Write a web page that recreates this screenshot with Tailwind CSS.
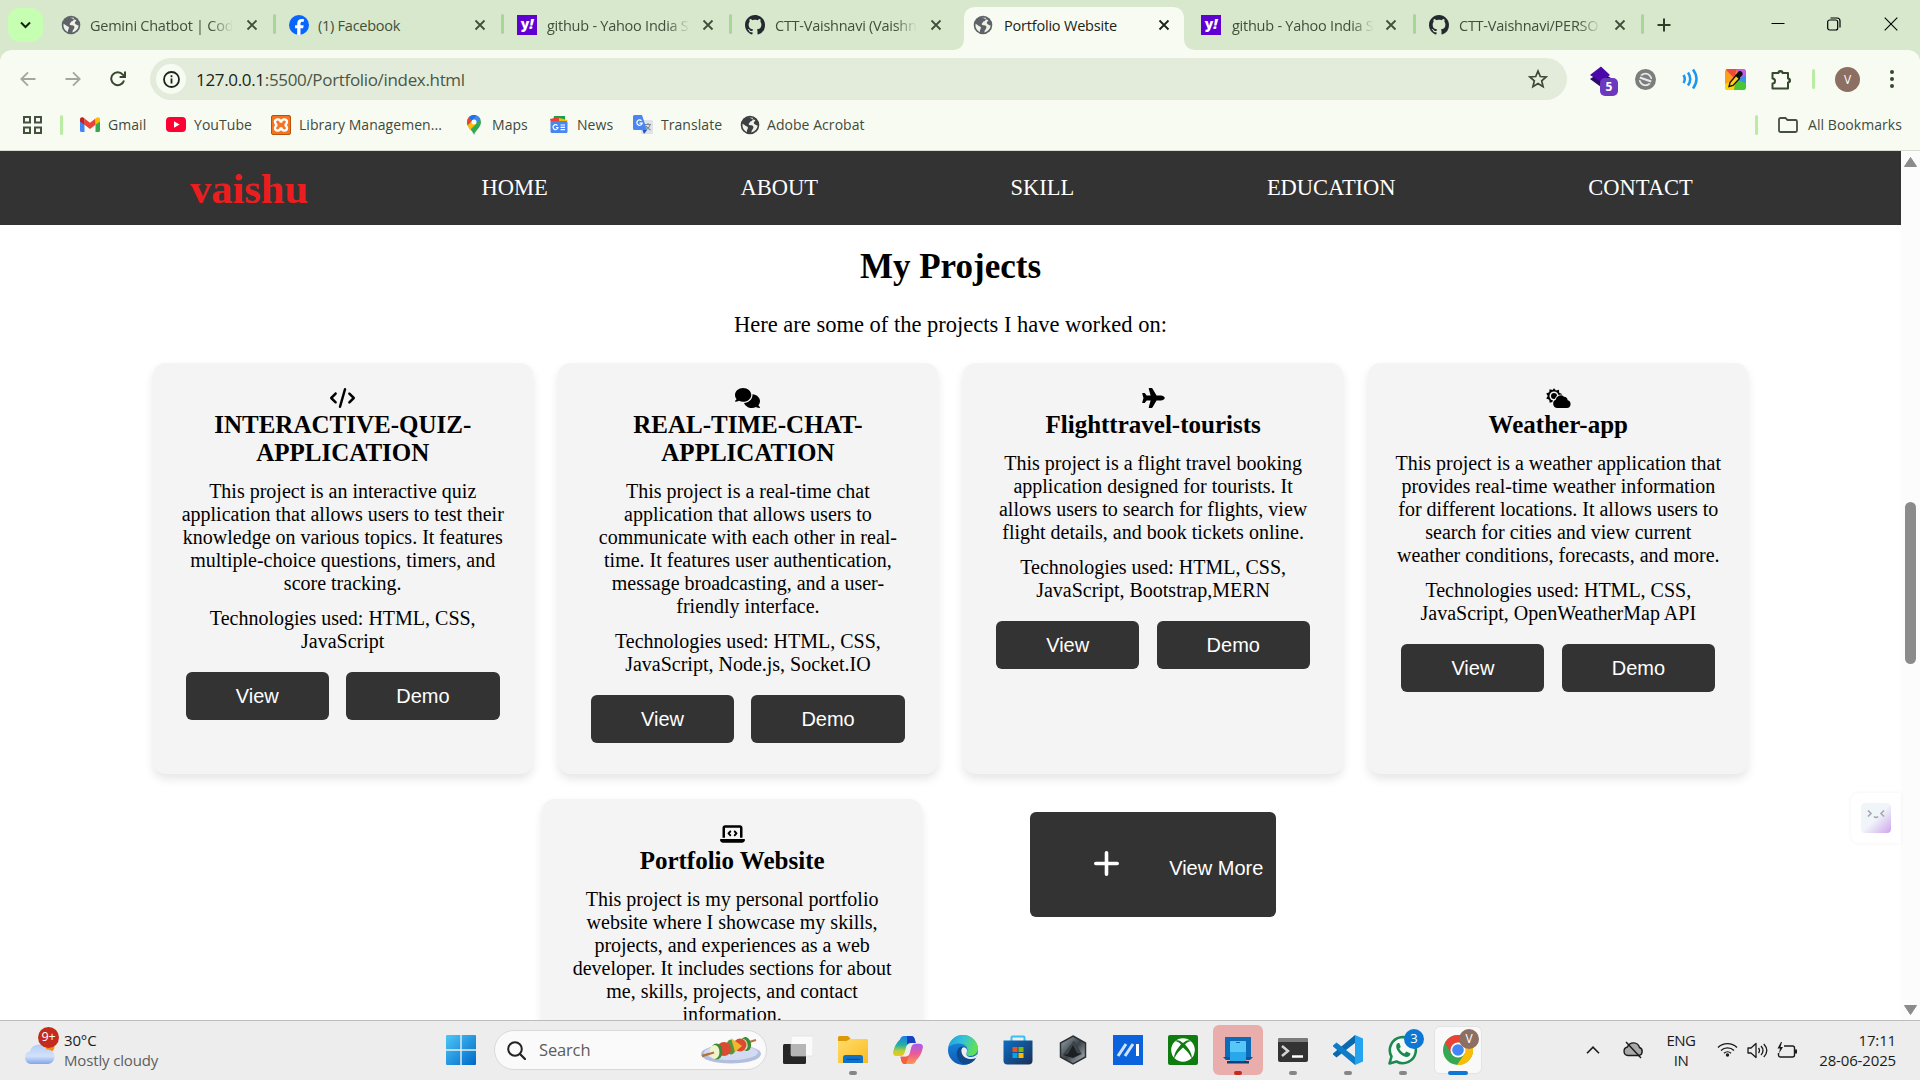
<!DOCTYPE html>
<html lang="en">
<head>
<meta charset="utf-8">
<title>Portfolio Website</title>
<script src="https://cdn.jsdelivr.net/npm/@tailwindcss/browser@4"></script>
</head>
<body class="w-[1920px] h-[1080px] overflow-hidden bg-white font-['Open_Sans','Noto_Sans',sans-serif] text-black flex flex-col">
<svg class="absolute w-0 h-0">
  <symbol id="globe" viewBox="0 0 20 20"><circle cx="10" cy="10" r="9.3" fill="currentColor"/><path d="M9 2.6C10.5 3 12 2.4 12.8 2.9C13.4 5 11.6 6 10.4 6.6C9.6 7 9.8 8 9 8.6C8 9.4 9.2 10.4 10.8 10.2C12.6 10 13.6 11 13.4 12.4C13.2 14.2 11.4 14.6 11.4 17.4C14.6 17 17.4 14 17.6 10.6C16 10.4 15 9.6 14 8.6C13.2 7.8 14.6 6.4 15.4 5.2M2.6 8.8C4.4 9.6 5.4 11 7 11.6C8.2 12.2 8.2 13.4 7.4 14.2C6.8 15 7 16 7 17C4.2 16 2 13 2.6 8.8Z" fill="#eef3e8"/></symbol>
  <symbol id="github" viewBox="0 0 16 16"><path fill="#24292f" d="M8 0C3.58 0 0 3.58 0 8c0 3.54 2.29 6.53 5.47 7.59.4.07.55-.17.55-.38 0-.19-.01-.82-.01-1.49-2.01.37-2.53-.49-2.69-.94-.09-.23-.48-.94-.82-1.13-.28-.15-.68-.52-.01-.53.63-.01 1.08.58 1.23.82.72 1.21 1.87.87 2.33.66.07-.52.28-.87.51-1.07-1.78-.2-3.64-.89-3.64-3.95 0-.87.31-1.59.82-2.15-.08-.2-.36-1.02.08-2.12 0 0 .67-.21 2.2.82.64-.18 1.32-.27 2-.27s1.36.09 2 .27c1.53-1.04 2.2-.82 2.2-.82.44 1.1.16 1.92.08 2.12.51.56.82 1.27.82 2.15 0 3.07-1.87 3.75-3.65 3.95.29.25.54.73.54 1.48 0 1.07-.01 1.93-.01 2.2 0 .21.15.46.55.38A8.01 8.01 0 0 0 16 8c0-4.42-3.58-8-8-8z"/></symbol>
  <symbol id="close" viewBox="0 0 12 12"><path d="M1.5 1.5l9 9M10.5 1.5l-9 9" stroke="currentColor" stroke-width="1.8" fill="none"/></symbol>
  <linearGradient id="gWin" x1="0" y1="0" x2="1" y2="1"><stop offset="0" stop-color="#4cc8f8"/><stop offset="1" stop-color="#0067c8"/></linearGradient>
  <linearGradient id="gCloud" x1="0" y1="0" x2="0" y2="1"><stop offset="0" stop-color="#b4cdf6"/><stop offset=".6" stop-color="#d3e1fa"/><stop offset="1" stop-color="#7fa5ea"/></linearGradient>
  <linearGradient id="gFold" x1="0" y1="0" x2="1" y2="1"><stop offset="0" stop-color="#ffdc6b"/><stop offset="1" stop-color="#fbbc20"/></linearGradient>
  <linearGradient id="gCopA" x1="0" y1="0" x2="0" y2="1"><stop offset="0" stop-color="#1a7fe8"/><stop offset=".45" stop-color="#22b0a5"/><stop offset=".75" stop-color="#b9cf3a"/><stop offset="1" stop-color="#f5c518"/></linearGradient>
  <linearGradient id="gCopB" x1="0" y1="0" x2="0" y2="1"><stop offset="0" stop-color="#a65bf0"/><stop offset=".5" stop-color="#ee5a96"/><stop offset="1" stop-color="#fb9a4c"/></linearGradient>
  <linearGradient id="gEdA" x1="0" y1="0" x2="1" y2=".3"><stop offset="0" stop-color="#1f9be0"/><stop offset=".5" stop-color="#33c2d8"/><stop offset="1" stop-color="#5fe05a"/></linearGradient>
  <linearGradient id="gEdB" x1="0" y1="0" x2="0" y2="1"><stop offset="0" stop-color="#1a8fe3"/><stop offset="1" stop-color="#0d5bb8"/></linearGradient>
  <linearGradient id="gStore" x1="0" y1="0" x2="1" y2="1"><stop offset="0" stop-color="#0c6fc4"/><stop offset="1" stop-color="#1d2f55"/></linearGradient>
  <linearGradient id="gHex" x1="0" y1="0" x2="1" y2="1"><stop offset="0" stop-color="#a2acb4"/><stop offset=".5" stop-color="#3b4248"/><stop offset="1" stop-color="#c3c8cc"/></linearGradient>
</svg>

<!-- Tab strip -->
<div class="relative h-[50px] shrink-0 bg-[#d7e8cd] flex items-center text-[#3f4f3a] text-[14.5px] tracking-[-0.25px]">
  <div class="ml-2 w-[35px] h-[34px] rounded-xl bg-[#c6ffb1] grid place-items-center text-[#14210f]">
    <svg class="w-[11px] h-[8px]" viewBox="0 0 11 8"><path d="M1 1.5l4.500 4.500L10 1.500" fill="none" stroke="currentColor" stroke-width="2"/></svg>
  </div>
  <div class="flex ml-[5px]">
    <div class="w-[228px] h-[34px] flex items-center pl-[13px] relative"><svg class="w-5 h-5 text-[#5f6368]"><use href="#globe"/></svg><span class="ml-[9px] pt-[2px] w-[143px] overflow-hidden whitespace-nowrap [mask-image:linear-gradient(to_right,#000_84%,transparent)]">Gemini Chatbot | Cod</span><svg class="ml-[13px] w-3 h-3"><use href="#close"/></svg><i class="absolute right-0 top-[6px] w-[3px] h-[20px] rounded bg-[#a5d895]"></i></div>
    <div class="w-[228px] h-[34px] flex items-center pl-[13px] relative"><svg class="w-5 h-5" viewBox="0 0 20 20"><circle cx="10" cy="10" r="10" fill="#0866ff"/><path d="M8.200 20v-6.700H6.100v-3h2.100V8.900c0-3.400 1.500-5 4.900-5 .6 0 1.300.1 1.700.2v2.700h-1.100c-1.600 0-2.200.6-2.200 2.200v1.300h3.200l-.6 3h-2.600V20z" fill="#fff"/></svg><span class="ml-[9px] pt-[2px] w-[141px] overflow-hidden whitespace-nowrap">(1) Facebook</span><svg class="ml-[15px] w-3 h-3"><use href="#close"/></svg><i class="absolute right-0 top-[6px] w-[3px] h-[20px] rounded bg-[#a5d895]"></i></div>
    <div class="w-[228px] h-[34px] flex items-center pl-[13px] relative"><span class="w-5 h-5 bg-[#5f01d1] text-white font-extrabold text-[14px] leading-[18px] text-center">y<i>!</i></span><span class="ml-[10px] pt-[2px] w-[143px] overflow-hidden whitespace-nowrap [mask-image:linear-gradient(to_right,#000_84%,transparent)]">github - Yahoo India S</span><svg class="ml-[12px] w-3 h-3"><use href="#close"/></svg><i class="absolute right-0 top-[6px] w-[3px] h-[20px] rounded bg-[#a5d895]"></i></div>
    <div class="w-[228px] h-[34px] flex items-center pl-[13px] relative"><svg class="w-5 h-5"><use href="#github"/></svg><span class="ml-[10px] pt-[2px] w-[142px] overflow-hidden whitespace-nowrap [mask-image:linear-gradient(to_right,#000_84%,transparent)]">CTT-Vaishnavi (Vaishn</span><svg class="ml-[13px] w-3 h-3"><use href="#close"/></svg></div>
    <div class="w-[228px] h-[34px] flex items-center pl-[13px] relative text-[#1a2416]">
      <svg class="absolute left-[-8px] top-[-1px] w-[244px] h-[43px]" viewBox="0 0 244 43"><path d="M0 43C8 43 12 39 12 31V12C12 4 16 0 24 0H220C228 0 232 4 232 12V31C232 39 236 43 244 43Z" fill="#f8fbf2"/></svg>
      <svg class="relative w-5 h-5 text-[#5f6368]"><use href="#globe"/></svg><span class="relative ml-[11px] pt-[2px] w-[141px] overflow-hidden whitespace-nowrap tracking-[-0.2px]">Portfolio Website</span><svg class="relative ml-[13px] w-3 h-3"><use href="#close"/></svg></div>
    <div class="w-[228px] h-[34px] flex items-center pl-[13px] relative"><span class="w-5 h-5 bg-[#5f01d1] text-white font-extrabold text-[14px] leading-[18px] text-center">y<i>!</i></span><span class="ml-[11px] pt-[2px] w-[142px] overflow-hidden whitespace-nowrap [mask-image:linear-gradient(to_right,#000_84%,transparent)]">github - Yahoo India S</span><svg class="ml-[11px] w-3 h-3"><use href="#close"/></svg><i class="absolute right-0 top-[6px] w-[3px] h-[20px] rounded bg-[#a5d895]"></i></div>
    <div class="w-[228px] h-[34px] flex items-center pl-[13px] relative"><svg class="w-5 h-5"><use href="#github"/></svg><span class="ml-[10px] pt-[2px] w-[142px] overflow-hidden whitespace-nowrap [mask-image:linear-gradient(to_right,#000_84%,transparent)]">CTT-Vaishnavi/PERSO</span><svg class="ml-[13px] w-3 h-3"><use href="#close"/></svg><i class="absolute right-0 top-[6px] w-[3px] h-[20px] rounded bg-[#a5d895]"></i></div>
  </div>
  <svg class="ml-[13px] w-[14px] h-[14px]" viewBox="0 0 14 14"><path d="M7 .5v13M.5 7h13" stroke="#2f3d2a" stroke-width="2"/></svg>
  <div class="ml-auto flex items-center text-black mb-[2px]">
    <svg class="w-[14px] h-[14px]" viewBox="0 0 14 14"><path d="M.5 6.500h13" stroke="currentColor"/></svg>
    <svg class="ml-[42px] w-[14px] h-[14px]" viewBox="0 0 14 14"><rect x=".7" y="3" width="10" height="10" rx="2" fill="none" stroke="currentColor" stroke-width="1.200"/><path d="M3.500 1h6.500a3 3 0 0 1 3 3v6.500" fill="none" stroke="currentColor" stroke-width="1.200"/></svg>
    <svg class="ml-[43px] mr-[22px] w-[14px] h-[14px]" viewBox="0 0 14 14"><path d="M.7.7l12.600 12.600M13.300.7L.7 13.300" stroke="currentColor" stroke-width="1.100"/></svg>
  </div>
</div>

<!-- Toolbar -->
<div class="h-[50px] shrink-0 bg-[#d7e8cd]">
<div class="h-[50px] bg-[#f8fbf2] rounded-t-[12px] flex items-center pt-2">
  <svg class="ml-[20px] w-4 h-4" viewBox="0 0 16 16"><path d="M15.500 8H1.500M8 1.300L1.300 8L8 14.700" fill="none" stroke="#a2a89d" stroke-width="1.800"/></svg>
  <svg class="ml-[29px] w-4 h-4" viewBox="0 0 16 16"><path d="M.5 8h14M8 1.300L14.700 8L8 14.700" fill="none" stroke="#a2a89d" stroke-width="1.800"/></svg>
  <svg class="ml-[29px] w-4 h-4" viewBox="0 0 16 16"><path d="M14 9.500A6.500 6.500 0 1 1 12.800 3.600L14.500 5.500M15 .6V6H9.600" fill="none" stroke="#37482f" stroke-width="2"/></svg>
  <div class="ml-[24px] w-[1417px] h-[42px] rounded-full bg-[#e3ecdb] flex items-center text-[17px] tracking-[-0.33px] text-[#4b5746]">
    <span class="ml-[6px] w-[30px] h-[30px] rounded-full bg-[#f8fbf2] grid place-items-center"><svg class="w-[17px] h-[17px]" viewBox="0 0 17 17"><circle cx="8.500" cy="8.500" r="7.500" fill="none" stroke="#1c2618" stroke-width="1.800"/><path d="M8.500 7.500v5M8.500 4.200v2" stroke="#1c2618" stroke-width="1.800"/></svg></span>
    <span class="ml-[10px] pt-[2px] whitespace-nowrap"><span class="text-[#1a2416]">127.0.0.1</span>:5500/Portfolio/index.html</span>
    <svg class="ml-auto mr-[19px] w-5 h-5" viewBox="0 0 20 20"><path d="M10 2l2.300 5.500 5.900.5-4.500 3.900 1.400 5.800L10 14.600 4.900 17.700l1.400-5.800L1.800 8l5.900-.5z" fill="none" stroke="#3c4838" stroke-width="1.700"/></svg>
  </div>
  <div class="relative ml-[23px] w-[28px] h-[30px] top-[2px]"><svg class="w-[22px] h-[22px]" viewBox="0 0 22 22"><path d="M0 13l11-7 10 6-10 9z" fill="#2b0a68"/><path d="M0 9l11-8.500L20 9l-9 7z" fill="#4a08a8"/></svg><span class="absolute left-[10px] top-[12px] w-[18px] h-[18px] rounded-[5px] bg-[#6c38bd] text-white text-[12px] leading-[18px] font-bold text-center">5</span></div>
  <svg class="ml-[17px] w-[21px] h-[21px]" viewBox="0 0 21 21"><circle cx="10.500" cy="10.500" r="10.500" fill="#7d7d7d"/><circle cx="10.500" cy="10.500" r="5.800" fill="none" stroke="#e8eae6" stroke-width="1.800"/><path d="M1.500 7.500L19.500 13.500" stroke="#7d7d7d" stroke-width="5"/><path d="M4.800 8.500L16.200 12.500" stroke="#e8eae6" stroke-width="2.200"/></svg>
  <svg class="ml-[26px] w-[18px] h-[22px]" viewBox="0 0 18 22"><path d="M1.500 7q2.500 4 0 8M6 4.500q4.500 6.500 0 13M11 1.500q7 9.500 0 19" fill="none" stroke="#1a97f5" stroke-width="2.500"/></svg>
  <svg class="ml-[25px] w-[21px] h-[21px]" viewBox="0 0 21 21"><defs><clipPath id="cp"><rect width="21" height="21" rx="3"/></clipPath></defs><g clip-path="url(#cp)"><path d="M0 0h21v21H0z" fill="#ff9e1b"/><path d="M0 0h12l-3 9z" fill="#f2483c"/><path d="M12 0h9v7l-10 4z" fill="#c75be8"/><path d="M21 6v9L10 11z" fill="#3a8ef0"/><path d="M21 14v7H9l1-11z" fill="#49c633"/><path d="M0 21h9l1-10-10 4z" fill="#ffd600"/></g><path d="M4 17.500l1-4 6-7 3.500 3-6.500 7z" fill="#ffcf1a" stroke="#111" stroke-width="1.300"/><path d="M10 6l1.500-1 2-2.500c2-1.500 5 1 4 3.500l-2.500 2.500-.5 1.700z" fill="#111"/></svg>
  <svg class="ml-[25px] w-[21px] h-[21px]" viewBox="0 0 21 21"><path d="M1.500 4H7.500A2 2 0 0 1 11.500 4H17V9.500A2 2 0 0 1 17 13.500V19.500H1.500V14.500A2.500 2.500 0 0 0 1.500 9.500Z" fill="none" stroke="#37482f" stroke-width="2" stroke-linejoin="round"/><path d="M7.500 3.500a2 2 0 0 1 4 0zM17.500 9.500a2 2 0 0 1 0 4z" fill="#37482f"/></svg>
  <i class="ml-[20px] w-[3px] h-5 rounded bg-[#b8eda3]"></i>
  <span class="ml-[20px] w-[25px] h-[25px] rounded-full bg-[#8d6e63] text-white text-[12px] leading-[25px] text-center">V</span>
  <svg class="ml-[30px] w-1 h-[18px]" viewBox="0 0 4 18"><circle cx="2" cy="2" r="2" fill="#37482f"/><circle cx="2" cy="9" r="2" fill="#37482f"/><circle cx="2" cy="16" r="2" fill="#37482f"/></svg>
</div>
</div>

<!-- Bookmarks bar -->
<div class="h-[51px] shrink-0 bg-[#f8fbf2] border-b border-[#d5ddcf] flex items-center pb-[1px] text-[14px] tracking-[0.05px] text-[#3f4a3b] whitespace-nowrap">
  <svg class="ml-[23px] w-[19px] h-[18px]" viewBox="0 0 19 18"><path d="M1 1h6v5.500H1zM12 1h6v5.500h-6zM1 11.500h6V17H1zM12 11.500h6V17h-6z" fill="none" stroke="#45503f" stroke-width="2"/></svg>
  <i class="ml-[18px] w-[3px] h-5 rounded bg-[#b8eda3]"></i>
  <div class="ml-[17px] w-[86px] flex items-center gap-2"><svg class="w-5 h-[15px]" viewBox="0 0 20 15"><path d="M0 2v11.500A1.500 1.500 0 0 0 1.500 15H4.500V5z" fill="#4285f4"/><path d="M20 2v11.500A1.500 1.500 0 0 1 18.500 15H15.500V5z" fill="#34a853"/><path d="M4.500 1.500V7.800L10 12l5.500-4.200V1.500L10 5.700z" fill="#ea4335"/><path d="M0 2.200V4.500L4.500 7.800V1.500L3.500.7C2 -.4 0 .5 0 2.200z" fill="#c5221f"/><path d="M20 2.200V4.500L15.500 7.800V1.500L16.500.7C18 -.4 20 .5 20 2.200z" fill="#fbbc04"/></svg>Gmail</div>
  <div class="w-[105px] flex items-center gap-2"><svg class="w-5 h-[15px]" viewBox="0 0 20 15"><rect width="20" height="15" rx="4" fill="#ff0033"/><path d="M8 4.200v6.600l5.600-3.300z" fill="#fff"/></svg>YouTube</div>
  <div class="w-[193px] flex items-center gap-2"><svg class="w-5 h-5" viewBox="0 0 20 20"><rect x=".5" y=".5" width="19" height="19" rx="1.500" fill="#f4741f" stroke="#b9530c"/><path d="M10 7.500C9 3.500 4 3.500 4 6.800 4 8.500 5.500 10 6.500 10 5.500 10 4 11.500 4 13.200 4 16.500 9 16.500 10 12.500 11 16.500 16 16.500 16 13.200 16 11.500 14.500 10 13.500 10 14.500 10 16 8.500 16 6.800 16 3.500 11 3.500 10 7.500z" fill="none" stroke="#fff" stroke-width="2.400"/></svg>Library Managemen...</div>
  <div class="w-[85px] flex items-center gap-2"><svg class="w-5 h-5" viewBox="0 0 20 20"><path d="M10 20C9 16 3 12.500 3 7a7 7 0 0 1 14 0C17 12.500 11 16 10 20z" fill="#34a853"/><path d="M3 7a7 7 0 0 1 2-5l3.500 3.500L3.600 10.500Q3 9 3 7z" fill="#ea4335"/><path d="M5 2A7 7 0 0 1 12.500.5L8 6z" fill="#1a73e8"/><path d="M12.500.5A7 7 0 0 1 16.300 4L12 8 8 6z" fill="#4285f4"/><path d="M3.600 10.500L8 6l4 3-6 6z" fill="#fbbc04"/><circle cx="10" cy="7" r="2.500" fill="#fff"/></svg>Maps</div>
  <div class="w-[84px] flex items-center gap-2"><svg class="w-5 h-5" viewBox="0 0 20 20"><path d="M5 1l11 0 0 6H4z" fill="#1e9e4a"/><path d="M1 4l9-2 1 6H2z" fill="#ea4335"/><path d="M10 3l8.500 2-1 4H10z" fill="#fbbc04"/><rect x="1.500" y="6" width="17" height="12" rx="1.500" fill="#4a86f0"/><path d="M8.500 10.500a2.500 2.500 0 1 0 .5 2H7M11.500 10h4.500M11.500 12.300h4.500M11.500 14.600h4.500" stroke="#fff" stroke-width="1.200" fill="none"/></svg>News</div>
  <div class="w-[107px] flex items-center gap-2"><svg class="w-5 h-5" viewBox="0 0 20 20"><rect x="8" y="5" width="12" height="14" rx="1.500" fill="#dfe3e8"/><path d="M12 9.500h6M15 8v1.500M17 9.500c-.5 3-2.500 4.500-4.500 5.500M13 11c1 2 3 3 4.500 4" stroke="#7a8794" stroke-width="1.100" fill="none"/><path d="M1.500 0H9l5 15H1.500A1.500 1.500 0 0 1 0 13.500v-12A1.500 1.500 0 0 1 1.500 0z" fill="#4a86f0"/><path d="M9.500 15H14l-3 4z" fill="#1c55c0"/><path d="M8.500 5.700a2.700 2.700 0 1 0 .7 2.500H6.500" stroke="#fff" stroke-width="1.300" fill="none"/></svg>Translate</div>
  <div class="flex items-center gap-[7px]"><svg class="w-5 h-5 text-[#3c4043]"><use href="#globe"/></svg>Adobe Acrobat</div>
  <i class="ml-auto w-[3px] h-5 rounded bg-[#b8eda3]"></i>
  <svg class="ml-[20px] w-[20px] h-[16px]" viewBox="0 0 20 16"><path d="M1 2.500A1.500 1.500 0 0 1 2.500 1H7.500L9.500 3H17.500A1.500 1.500 0 0 1 19 4.500V13.500A1.500 1.500 0 0 1 17.500 15H2.500A1.500 1.500 0 0 1 1 13.500Z" fill="none" stroke="#45503f" stroke-width="1.800"/></svg>
  <span class="ml-[10px] mr-[18px]">All Bookmarks</span>
</div>

<!-- Page viewport -->
<div class="h-[869px] shrink-0 flex overflow-hidden relative">
  <main class="w-[1901px] h-full overflow-hidden font-['Liberation_Serif',serif] text-[20px] leading-[23px]">
    <nav class="h-[74px] bg-[#333] text-white flex items-center gap-[192.6px] pl-[190px] text-[22.5px] leading-[26px]">
      <span class="w-[99px] text-[42.500px] leading-[48px] font-bold text-[#ea1e1e] mt-[2px]">vaishu</span>
      <span>HOME</span><span>ABOUT</span><span>SKILL</span><span>EDUCATION</span><span>CONTACT</span>
    </nav>
    <h2 class="mt-[22px] text-center text-[35px] leading-[40px] font-bold">My Projects</h2>
    <p class="mt-[25px] text-center text-[22.5px] leading-[26px]">Here are some of the projects I have worked on:</p>
    <section class="mt-[25px] flex justify-center gap-[25px]">
      <article class="w-[380.2px] h-[411px] p-[25px] rounded-[12.5px] bg-[#f4f4f4] shadow-[0_5px_10px_rgba(0,0,0,0.1)] text-center">
        <svg class="mx-auto w-[25px] h-[20px] mb-[3px]" viewBox="0 0 640 512"><path d="M392.800 1.200c-17-4.900-34.700 5-39.600 22l-128 448c-4.900 17 5 34.700 22 39.600s34.700-5 39.600-22l128-448c4.900-17-5-34.700-22-39.600zm80.600 120.100c-12.500 12.500-12.500 32.800 0 45.300L562.700 256l-89.400 89.400c-12.500 12.500-12.500 32.800 0 45.300s32.800 12.500 45.300 0l112-112c12.500-12.500 12.500-32.800 0-45.300l-112-112c-12.500-12.500-32.800-12.500-45.300 0zm-306.700 0c-12.500-12.500-32.800-12.500-45.300 0l-112 112c-12.500 12.500-12.500 32.800 0 45.300l112 112c12.500 12.500 32.800 12.500 45.300 0s12.500-32.800 0-45.300L77.300 256l89.400-89.400c12.500-12.500 12.500-32.800 0-45.300z"/></svg>
        <h3 class="text-[25px] leading-[28px] font-bold">INTERACTIVE-QUIZ-<br>APPLICATION</h3>
        <p class="mt-[13px]">This project is an interactive quiz application that allows users to test their knowledge on various topics. It features multiple-choice questions, timers, and score tracking.</p>
        <p class="mt-[12px]">Technologies used: HTML, CSS, JavaScript</p>
        <div class="mt-[19px] flex justify-center gap-[17.500px] font-['Liberation_Sans',sans-serif] text-white"><button class="w-[142.800px] h-12 rounded-md bg-[#333]">View</button><button class="w-[153.300px] h-12 rounded-md bg-[#333]">Demo</button></div>
      </article>
      <article class="w-[380.2px] h-[411px] p-[25px] rounded-[12.5px] bg-[#f4f4f4] shadow-[0_5px_10px_rgba(0,0,0,0.1)] text-center">
        <svg class="mx-auto w-[25px] h-[20px] mb-[3px]" viewBox="0 0 640 512"><path d="M208 352c114.900 0 208-78.800 208-176S322.900 0 208 0S0 78.800 0 176c0 38.600 14.700 74.300 39.600 103.400c-3.500 9.400-8.700 17.700-14.200 24.700c-4.800 6.200-9.700 11-13.300 14.300c-1.800 1.600-3.300 2.900-4.300 3.700c-.5 .4-.9 .7-1.100 .8l-.2 .2C1 327.200-1.400 334.400 .8 340.900S9.100 352 16 352c21.800 0 43.800-5.600 62.100-12.500c9.200-3.500 17.800-7.400 25.200-11.400C134.100 343.300 169.800 352 208 352zM448 176c0 112.300-99.100 196.900-216.500 207C255.800 457.400 336.400 512 432 512c38.200 0 73.900-8.700 104.700-23.900c7.500 4 16 7.900 25.200 11.400c18.300 6.900 40.300 12.500 62.100 12.500c6.900 0 13.100-4.500 15.200-11.100c2.100-6.600-.2-13.800-5.800-17.900l-.2-.2c-.2-.2-.6-.4-1.100-.8c-1-.8-2.500-2-4.300-3.700c-3.600-3.300-8.500-8.100-13.300-14.300c-5.500-7-10.700-15.400-14.200-24.700c24.900-29 39.600-64.700 39.600-103.400c0-92.800-84.900-168.900-192.600-175.500c.4 5.100 .6 10.300 .6 15.500z"/></svg>
        <h3 class="text-[25px] leading-[28px] font-bold">REAL-TIME-CHAT-<br>APPLICATION</h3>
        <p class="mt-[13px]">This project is a real-time chat application that allows users to communicate with each other in real-time. It features user authentication, message broadcasting, and a user-friendly interface.</p>
        <p class="mt-[12px]">Technologies used: HTML, CSS, JavaScript, Node.js, Socket.IO</p>
        <div class="mt-[19px] flex justify-center gap-[17.500px] font-['Liberation_Sans',sans-serif] text-white"><button class="w-[142.800px] h-12 rounded-md bg-[#333]">View</button><button class="w-[153.300px] h-12 rounded-md bg-[#333]">Demo</button></div>
      </article>
      <article class="w-[380.2px] h-[411px] p-[25px] rounded-[12.5px] bg-[#f4f4f4] shadow-[0_5px_10px_rgba(0,0,0,0.1)] text-center">
        <svg class="mx-auto w-[23px] h-[20px] mb-[3px]" viewBox="0 0 576 512"><path d="M482.300 192c34.200 0 93.700 29 93.700 64c0 36-59.500 64-93.700 64l-116.600 0L265.200 495.900c-5.700 10-16.300 16.100-27.800 16.100l-56.200 0c-10.600 0-18.300-10.200-15.400-20.400l49-171.600L112 320 68.800 377.600c-3 4-7.800 6.400-12.800 6.400l-42 0c-7.800 0-14-6.300-14-14c0-1.300 .2-2.600 .5-3.900L32 256 .5 145.900c-.4-1.300-.5-2.600-.5-3.900c0-7.800 6.300-14 14-14l42 0c5 0 9.800 2.400 12.800 6.400L112 192l102.900 0-49-171.600C162.900 10.200 170.600 0 181.200 0l56.200 0c11.500 0 22.100 6.200 27.800 16.100L365.700 192l116.600 0z"/></svg>
        <h3 class="text-[25px] leading-[28px] font-bold">Flighttravel-tourists</h3>
        <p class="mt-[13px]">This project is a flight travel booking application designed for tourists. It allows users to search for flights, view flight details, and book tickets online.</p>
        <p class="mt-[12px]">Technologies used: HTML, CSS, JavaScript, Bootstrap,MERN</p>
        <div class="mt-[19px] flex justify-center gap-[17.500px] font-['Liberation_Sans',sans-serif] text-white"><button class="w-[142.800px] h-12 rounded-md bg-[#333]">View</button><button class="w-[153.300px] h-12 rounded-md bg-[#333]">Demo</button></div>
      </article>
      <article class="w-[380.2px] h-[411px] p-[25px] rounded-[12.5px] bg-[#f4f4f4] shadow-[0_5px_10px_rgba(0,0,0,0.1)] text-center">
        <svg class="mx-auto w-[25px] h-[20px] mb-[3px]" viewBox="0 0 25 20"><path d="M8 .2l2 2.300 3-.8.200 3.100 2.900 1.200-1.600 2.500H7.900L6.500 14l-2.800.8-.5-3L.2 10.600 1.800 8 .2 5.400l3-1.100.4-3.100 3 .8z"/><circle cx="8" cy="8" r="4.500" fill="#f4f4f4"/><circle cx="8" cy="8" r="3"/><path d="M11.200 20a4.300 4.300 0 0 1-1.500-8.200A5 5 0 0 1 18 8.700a4 4 0 0 1 3.700 3.500A4 4 0 0 1 21 20z" stroke="#f4f4f4" stroke-width="1.600" paint-order="stroke"/></svg>
        <h3 class="text-[25px] leading-[28px] font-bold">Weather-app</h3>
        <p class="mt-[13px]">This project is a weather application that provides real-time weather information for different locations. It allows users to search for cities and view current weather conditions, forecasts, and more.</p>
        <p class="mt-[12px]">Technologies used: HTML, CSS, JavaScript, OpenWeatherMap API</p>
        <div class="mt-[19px] flex justify-center gap-[17.500px] font-['Liberation_Sans',sans-serif] text-white"><button class="w-[142.800px] h-12 rounded-md bg-[#333]">View</button><button class="w-[153.300px] h-12 rounded-md bg-[#333]">Demo</button></div>
      </article>
    </section>
    <section class="mt-[25px] pl-[542px] flex items-start">
      <article class="w-[380.2px] h-[411px] p-[25px] rounded-[12.5px] bg-[#f4f4f4] shadow-[0_5px_10px_rgba(0,0,0,0.1)] text-center">
        <svg class="mx-auto w-[25px] h-[20px] mb-[3px]" viewBox="0 0 640 512"><path d="M64 96c0-35.300 28.700-64 64-64H512c35.300 0 64 28.700 64 64V352H512V96H128V352H64V96zM0 403.200C0 392.600 8.600 384 19.200 384H620.800c10.600 0 19.200 8.600 19.200 19.200c0 42.400-34.400 76.800-76.800 76.800H76.800C34.400 480 0 445.600 0 403.200zM281 209l-31 31 31 31c9.400 9.400 9.400 24.600 0 33.900s-24.600 9.400-33.900 0l-48-48c-9.400-9.400-9.400-24.600 0-33.900l48-48c9.400-9.400 24.600-9.400 33.900 0s9.400 24.600 0 33.900zM393 175l48 48c9.400 9.400 9.400 24.600 0 33.900l-48 48c-9.400 9.400-24.600 9.400-33.900 0s-9.400-24.600 0-33.900l31-31-31-31c-9.400-9.400-9.400-24.600 0-33.900s24.600-9.400 33.900 0z"/></svg>
        <h3 class="text-[25px] leading-[28px] font-bold">Portfolio Website</h3>
        <p class="mt-[13px]">This project is my personal portfolio website where I showcase my skills, projects, and experiences as a web developer. It includes sections for about me, skills, projects, and contact information.</p>
      </article>
      <button class="ml-[108px] mt-[13px] w-[246px] h-[105px] rounded-md bg-[#333] text-white font-['Liberation_Sans',sans-serif] flex items-center pl-[64px]">
        <svg class="w-[25px] h-[25px] -mt-[2px]" viewBox="0 0 25 25"><path d="M12.500 1.800v21.400M1.800 12.500h21.400" stroke="#fff" stroke-width="3.600" stroke-linecap="round"/></svg>
        <span class="ml-[50px] mt-[8px] whitespace-nowrap">View More</span>
      </button>
    </section>
  </main>
  <div class="w-[19px] h-full bg-[#fcfcfc] flex flex-col items-center">
    <svg class="mt-[6px] w-[13px] h-[10px]" viewBox="0 0 13 10"><path d="M6.500.5L12.500 9.500H.5z" fill="#8b8b8b" stroke="#8b8b8b" stroke-linejoin="round"/></svg>
    <i class="mt-[335px] w-[11px] h-[162px] rounded-full bg-[#8b8b8b]"></i>
    <svg class="mt-auto mb-[5px] w-[13px] h-[10px]" viewBox="0 0 13 10"><path d="M6.500 9.500L12.500.5H.5z" fill="#8b8b8b" stroke="#8b8b8b" stroke-linejoin="round"/></svg>
  </div>
  <div class="absolute left-[1851px] top-[642px] w-[50px] h-[50px] rounded-l-lg bg-white shadow-[0_0_4px_rgba(0,0,0,0.05)] grid place-items-center">
    <div class="w-[30px] h-[30px] rounded bg-linear-to-br from-[#eff5f8] from-50% to-[#cfa4ec] grid place-items-center"><svg class="w-[18px] h-[10px] -mt-2" viewBox="0 0 18 10"><path d="M1 1.500l3 3-3 3M17 1.500l-3 3 3 3M7 7.500q2 2 4 0" fill="none" stroke="#a3a6ad" stroke-width="1.600"/></svg></div>
  </div>
</div>

<!-- Taskbar -->
<div class="h-[60px] shrink-0 bg-[#ededed] border-t border-[#bdbdbd] pb-[1px] flex items-center text-[15px] leading-[20px] tracking-[-0.15px] text-[#1b1b1b]">
  <div class="relative ml-[24px] w-[40px] h-[40px]">
    <svg class="absolute left-0 top-[12px] w-[32px] h-[22px]" viewBox="0 0 32 22"><circle cx="26" cy="5" r="4.500" fill="#f58a1c"/><path d="M7 22A6.500 6.500 0 0 1 6 9.200 8.500 8.500 0 0 1 22 7.500 7.300 7.300 0 0 1 24.500 22z" fill="url(#gCloud)"/></svg>
    <span class="absolute left-[14px] -top-[3px] w-[21px] h-[21px] rounded-full bg-[#c42b1c] text-white text-[12.5px] leading-[20px] text-center">9+</span>
  </div>
  <div class="w-[382px]">30°C<br><span class="text-[#5d5d5d]">Mostly cloudy</span></div>
  <svg class="w-[30px] h-[30px]" viewBox="0 0 30 30"><path d="M0 1a1 1 0 0 1 1-1H14.300V14.300H0zM15.700 0H29a1 1 0 0 1 1 1V14.300H15.700zM0 15.700H14.300V30H1a1 1 0 0 1-1-1zM15.700 15.700H30V29a1 1 0 0 1-1 1H15.700z" fill="url(#gWin)"/></svg>
  <div class="ml-[18px] w-[273px] h-10 rounded-full bg-[#fafafa] border border-[#d9d9d9] flex items-center">
    <svg class="ml-[12px] w-[19px] h-[19px]" viewBox="0 0 19 19"><circle cx="8" cy="8" r="6.800" fill="none" stroke="#222" stroke-width="2"/><path d="M13 13l5 5" stroke="#222" stroke-width="2.200" stroke-linecap="round"/></svg>
    <span class="ml-[13px] text-[16.5px] text-[#5c5c5c]">Search</span>
    <svg class="ml-auto mr-[4px] w-[62px] h-[30px]" viewBox="0 0 62 30"><ellipse cx="31" cy="19" rx="30" ry="9.500" fill="#b3bedf"/><ellipse cx="31" cy="17.500" rx="27" ry="7.500" fill="#d3dbf2"/><path d="M2 21L56 5" stroke="#b5733c" stroke-width="2.200"/><ellipse cx="46" cy="9" rx="5" ry="7" fill="#3d8a35" transform="rotate(-15 46 9)"/><ellipse cx="44" cy="9.500" rx="3.500" ry="5.500" fill="#dfe9b5" transform="rotate(-15 44 9.500)"/><circle cx="40" cy="10" r="6.500" fill="#dd4a32"/><ellipse cx="31" cy="12" rx="5" ry="7.500" fill="#4e9a3c"/><path d="M31 3l11 8-7 6z" fill="#f3b92e"/><circle cx="24" cy="14" r="7" fill="#dd4a32"/><ellipse cx="16.500" cy="16.500" rx="6" ry="8" fill="#3d8a35"/><ellipse cx="14.500" cy="17" rx="5" ry="7" fill="#f0f3cf"/><path d="M2 21l12-3.500" stroke="#b5733c" stroke-width="2.200"/></svg>
  </div>
  <div class="ml-[3px] flex">
    <div class="w-[55px] h-[50px] grid place-items-center"><svg class="w-[30px] h-[30px]" viewBox="0 0 30 30"><rect x="0" y="9" width="23" height="20" rx="1.500" fill="#262626"/><rect x="8" y="1" width="22" height="20" rx="1.500" fill="#fafafa" stroke="#dedede" stroke-width=".6"/><path d="M8 9h15v12H8z" fill="#b5b5b5"/></svg></div>
    <div class="relative w-[55px] h-[50px] grid place-items-center"><svg class="w-[30px] h-[28px]" viewBox="0 0 30 28"><path d="M0 1.500A1.500 1.500 0 0 1 1.500 0H10l2.500 2.500-2 4H0z" fill="#dc9a06"/><path d="M0 5h8.500L12 3H28.500A1.500 1.500 0 0 1 30 4.500V27H0z" fill="url(#gFold)"/><path d="M5 27V21.500A2.500 2.500 0 0 1 7.500 19H22.500A2.500 2.500 0 0 1 25 21.500V27z" fill="#0f72c8"/><path d="M9 23.300h12" stroke="#0a4f94" stroke-width="1.300" stroke-linecap="round"/></svg><i class="absolute bottom-0 w-2 h-1 rounded-full bg-[#868686]"></i></div>
    <div class="w-[55px] h-[50px] grid place-items-center"><svg class="w-[30px] h-[28px]" viewBox="0 0 30 28"><path d="M7 3.500Q8 0 11 0H18.500Q21 0 22 4L22.500 7H17Q14.500 7 13.500 10L11.500 17Q10.500 20 7.500 20H4Q-.5 20 .2 15.500Q2 8 7 3.500z" fill="url(#gCopA)"/><path d="M14 0H18.500Q21 0 22 4L22.800 7H17.500Q15 7 14 9z" fill="#1b3fc2"/><path d="M23 24.500Q22 28 19 28H11.500Q9 28 8.200 24L7.500 20.800H13Q15.500 20.800 16.500 18L18.500 10.500Q19.500 7.800 22.500 7.800H26Q30.500 7.800 29.800 12Q28 20 23 24.500z" fill="url(#gCopB)"/><path d="M7.500 20.800H13Q15 20.800 16 19L13 28H11.500Q9 28 8.200 24z" fill="#f2603c"/></svg></div>
    <div class="w-[55px] h-[50px] grid place-items-center"><svg class="w-[30px] h-[30px]" viewBox="0 0 30 30"><circle cx="15" cy="15" r="15" fill="url(#gEdB)"/><path d="M.5 12C2 4.500 8 0 15 0 23.500 0 30 6.500 30 13.500 30 18 26.500 21 22.500 21 19 21 17.500 19.500 19 17.500 21 12 16.500 8.500 11 8.500 6 8.500 1.500 11 .5 12z" fill="url(#gEdA)"/><path d="M10 14C6 21 12 30 19 29.500 23 28.500 26.500 26 28 23 20 26 14.500 22 14 17 13 13 14.500 12 15.500 11.500 13 11 11 12.300 10 14z" fill="#114a8b"/><path d="M13.500 17C13 13 15 12 16.500 12.500 19.500 13.500 19.500 16 18.500 18 17.500 20.500 20 22 23 22 26 22 28 20.500 29.500 18.500L28.300 22.800C22 26 14.500 23 13.500 17z" fill="#ededed"/></svg></div>
    <div class="w-[55px] h-[50px] grid place-items-center"><svg class="w-[30px] h-[30px]" viewBox="0 0 30 30"><path d="M8.500 7V2.500A1 1 0 0 1 9.500 1.500H20.500A1 1 0 0 1 21.500 2.500V7" fill="none" stroke="#35c2f2" stroke-width="2"/><path d="M.5 5.500H29.500V25.500A4 4 0 0 1 25.500 29.500H4.500A4 4 0 0 1 .5 25.500z" fill="url(#gStore)"/><path d="M9.500 12h5v5h-5z" fill="#f25022"/><path d="M15.500 12h5v5h-5z" fill="#7fba00"/><path d="M9.500 18h5v5h-5z" fill="#00a4ef"/><path d="M15.500 18h5v5h-5z" fill="#ffb900"/></svg></div>
    <div class="w-[55px] h-[50px] grid place-items-center"><svg class="w-[28px] h-[30px]" viewBox="0 0 28 30"><path d="M14 1L26.500 8V22L14 29 1.500 22V8z" fill="url(#gHex)" stroke="#2c3135" stroke-width="1.500"/><path d="M15 6L22.500 19 14 23 4 20z" fill="#1c2023"/><path d="M15 6L4 20l5-1 5-9 4 8 4.500 1z" fill="#3e454b"/></svg></div>
    <div class="w-[55px] h-[50px] grid place-items-center"><svg class="w-[30px] h-[30px]" viewBox="0 0 30 30"><path d="M0 0h30v30H0z" fill="#0a63dd"/><path d="M5 21L13 9M12 21L20 9" stroke="#cfe2ff" stroke-width="3"/><path d="M24.500 9v12" stroke="#fff" stroke-width="3"/></svg></div>
    <div class="w-[55px] h-[50px] grid place-items-center"><svg class="w-[30px] h-[30px]" viewBox="0 0 30 30"><rect width="30" height="30" rx="2" fill="#107c10"/><circle cx="15" cy="15" r="11.800" fill="#fff"/><path d="M6.500 6.500C10 4 12 6 15 8 18 6 20 4 23.500 6.500 21.500 5.800 18.500 8 17 9.500 20.500 13 25 20 23.500 23.300 22 19 18 15 15 12.500 12 15 8 19 6.500 23.300 5 20 9.500 13 13 9.500 11.500 8 8.500 5.800 6.500 6.500z" fill="#107c10"/></svg></div>
    <div class="relative w-[55px] h-[50px] grid place-items-center"><div class="w-[50px] h-[50px] rounded-md bg-[#e9aeab] grid place-items-center"><svg class="w-[30px] h-[28px]" viewBox="0 0 30 28"><path d="M2 1H28V21H2z" fill="#0c6cba"/><path d="M0 21H30L27 24H3z" fill="#0a559c"/><rect x="7" y="5" width="16" height="22" rx="1" fill="#28a8ea"/><rect x="7" y="5" width="16" height="11" rx="1" fill="#55c8f8"/><path d="M13 6.500h4" stroke="#0c6cba"/><path d="M4 25H26V27.500H4z" fill="#083f7a"/></svg></div><i class="absolute bottom-0 w-2 h-1 rounded-full bg-[#c42b1c]"></i></div>
    <div class="relative w-[55px] h-[50px] grid place-items-center"><svg class="w-[30px] h-[24px]" viewBox="0 0 30 24"><rect width="30" height="24" rx="2" fill="#333"/><path d="M0 2a2 2 0 0 1 2-2H28a2 2 0 0 1 2 2V4H0z" fill="#7c7c7c"/><path d="M4 8l6 5-6 5" fill="none" stroke="#d5d5d5" stroke-width="2.500"/><path d="M14 18.500h11" stroke="#fff" stroke-width="2.500"/></svg><i class="absolute bottom-0 w-2 h-1 rounded-full bg-[#868686]"></i></div>
    <div class="relative w-[55px] h-[50px] grid place-items-center"><svg class="w-[30px] h-[30px]" viewBox="0 0 30 30"><path d="M22 0L30 3.500V26.500L22 30z" fill="#24a3f0"/><path d="M22 0V8L3.500 22.500 0 19.500V18.500z" fill="#0868b0"/><path d="M22 30V22L3.500 7.500 0 10.500V11.500z" fill="#107cc8"/></svg><i class="absolute bottom-0 w-2 h-1 rounded-full bg-[#868686]"></i></div>
    <div class="relative w-[55px] h-[50px] grid place-items-center"><svg class="w-[30px] h-[30px]" viewBox="0 0 30 30"><path d="M1.500 28.500L3.500 21.500A13 13 0 1 1 8.500 26.500z" fill="#f5faf6" stroke="#1c8a50" stroke-width="2.600" stroke-linejoin="round"/><path d="M10 8C8 9 7.500 12 9.500 15.500 12 19.500 15 21.500 18 22 20.500 22.200 22.500 20.500 22.500 18.500L18.500 16.500 16.500 18.500C14 17.500 12.500 16 11.300 13.500L12.800 12 11.300 8z" fill="#1c8a50"/></svg><span class="absolute left-[29px] top-[4px] w-5 h-5 rounded-full bg-[#0d78d3] text-white text-[13px] leading-[19px] text-center">3</span><i class="absolute bottom-0 w-2 h-1 rounded-full bg-[#868686]"></i></div>
    <div class="relative w-[55px] h-[50px] grid place-items-center"><div class="w-[48px] h-[48px] rounded-md bg-[#f9f9f9] border border-[#e3e3e3] grid place-items-center"><svg class="w-[30px] h-[30px]" viewBox="0 0 30 30"><circle cx="15" cy="15" r="15" fill="#34a853"/><path d="M15 0A15 15 0 0 1 28 7.500H15L8.500 19 2 7.500A15 15 0 0 1 15 0z" fill="#ea4335"/><path d="M28 7.500A15 15 0 0 1 14 30L21.500 18.700 21.500 11.300 15 7.500z" fill="#fbbc04"/><circle cx="15" cy="15" r="7.500" fill="#fff"/><circle cx="15" cy="15" r="5.800" fill="#4285f4"/></svg></div><span class="absolute left-[29px] top-[4px] w-5 h-5 rounded-full bg-[#8d6e63] text-white text-[12px] leading-[19px] text-center">V</span><i class="absolute bottom-0 w-5 h-1 rounded-full bg-[#0d78d3]"></i></div>
  </div>
  <svg class="ml-[101px] w-[14px] h-[8px]" viewBox="0 0 14 8"><path d="M1 7.200l6-6 6 6" fill="none" stroke="#1b1b1b" stroke-width="1.600"/></svg>
  <svg class="ml-[23px] w-[21px] h-[18px]" viewBox="0 0 21 18"><path d="M5 14.500A4.300 4.300 0 0 1 4.500 6 6.300 6.300 0 0 1 16.500 6.500 4.200 4.200 0 0 1 16 14.500z" fill="#a9a9a9" stroke="#1b1b1b" stroke-width="1.400"/><path d="M3 1l15 16" stroke="#1b1b1b" stroke-width="1.400"/></svg>
  <div class="ml-[16px] w-[42px] text-center tracking-[-0.5px]">ENG<br>IN</div>
  <svg class="ml-[15px] w-[21px] h-[16px] mt-[-2px]" viewBox="0 0 21 16"><path d="M1 6.500a13.500 13.500 0 0 1 19 0M4 9.500a9.300 9.300 0 0 1 13 0M7 12.300a5 5 0 0 1 7 0" fill="none" stroke="#1b1b1b" stroke-width="1.400"/><circle cx="10.500" cy="14" r="1.700" fill="#1b1b1b"/></svg>
  <svg class="ml-[9px] w-[21px] h-[17px]" viewBox="0 0 21 17"><path d="M1 6H4L9 1.500V15.500L4 11H1z" fill="none" stroke="#1b1b1b" stroke-width="1.300" stroke-linejoin="round"/><path d="M11.500 6q2 2.500 0 5M14 4q4 4.500 0 9M16.800 2q6 6.500 0 13" fill="none" stroke="#1b1b1b" stroke-width="1.300"/></svg>
  <svg class="ml-[9px] w-[21px] h-[17px]" viewBox="0 0 21 17"><path d="M7 4H15.500A2 2 0 0 1 17.500 6V13A2 2 0 0 1 15.500 15H3.500A2 2 0 0 1 1.500 13V11" fill="none" stroke="#1b1b1b" stroke-width="1.400"/><path d="M18 7.500h2v4h-2z" fill="#1b1b1b"/><path d="M4 0L.5 6.500H3L2 11.500 6 5H3.500L5 0z" fill="#1b1b1b"/></svg>
  <div class="ml-auto mr-[24px] text-right">17:11<br>28-06-2025</div>
</div>
</body>
</html>
